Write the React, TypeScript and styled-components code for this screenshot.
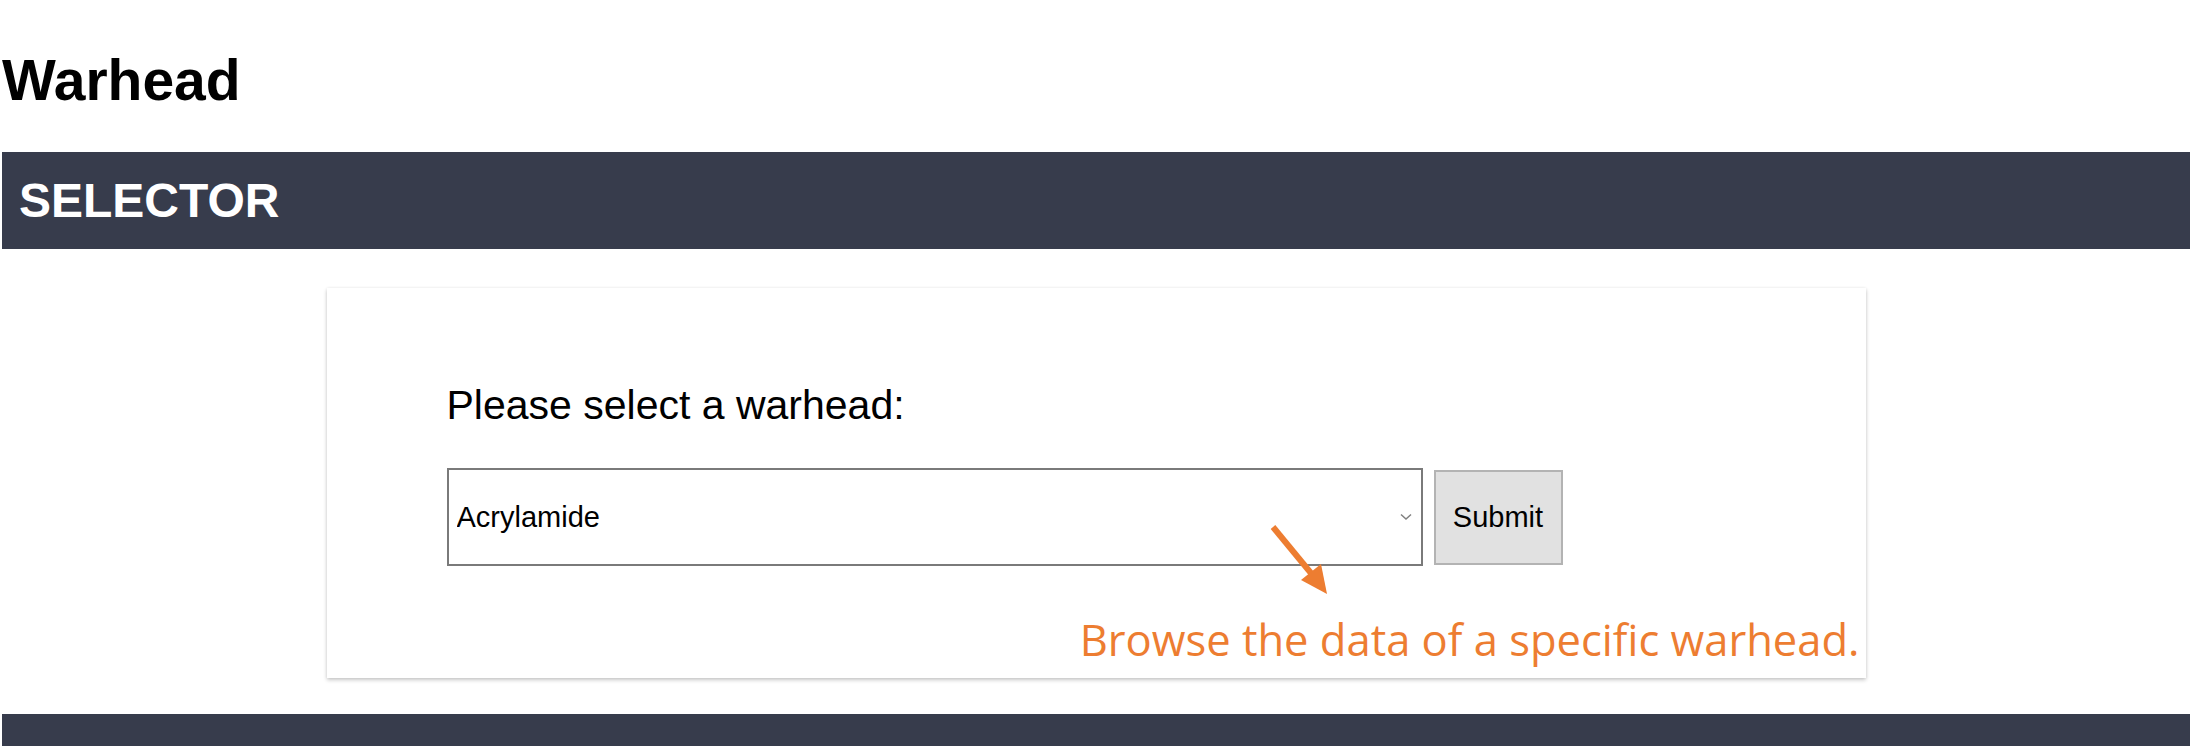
import React from 'react';
import styled, { createGlobalStyle } from 'styled-components';

const GlobalStyle = createGlobalStyle`
  html, body {
    margin: 0;
    padding: 0;
    background: #fff;
  }
  body {
    font-family: 'Liberation Sans', Arial, sans-serif;
  }
`;

const Page = styled.div`
  padding: 0 2px;
`;

const Title = styled.h1`
  margin: 0;
  padding-top: 47px;
  margin-bottom: 39px;
  font-size: 57px;
  font-weight: 700;
  line-height: normal;
  color: #000;
`;

const SectionBar = styled.div<{ height: number }>`
  display: flex;
  align-items: center;
  height: ${({ height }) => height}px;
  padding-left: 17px;
  background: #373c4c;
  color: #fff;
  font-size: 48px;
  font-weight: 700;
`;

const Body = styled.div`
  display: flex;
  justify-content: center;
  padding: 39px 0 36px;
`;

const Card = styled.div`
  position: relative;
  width: 1539px;
  box-sizing: border-box;
  padding: 94px 6px 14px 120px;
  background: #fff;
  box-shadow: 0 2px 4px rgba(0, 0, 0, 0.22), 0 0 3px rgba(0, 0, 0, 0.06);
`;

const Prompt = styled.div`
  font-size: 41px;
  line-height: normal;
  color: #000;
`;

const FormRow = styled.div`
  display: flex;
  align-items: center;
  gap: 11px;
  margin-top: 39px;
`;

const SelectBox = styled.div`
  position: relative;
  width: 976px;
  height: 98px;
`;

const Select = styled.select`
  appearance: none;
  width: 100%;
  height: 100%;
  box-sizing: border-box;
  padding: 0 0 0 8px;
  border: 2px solid #7a7a7a;
  border-radius: 0;
  background: #fff;
  font-family: 'Liberation Sans', Arial, sans-serif;
  font-size: 29px;
  color: #000;
  outline: none;
`;

const Chevron = styled.svg`
  position: absolute;
  right: 11px;
  top: 45px;
  pointer-events: none;
`;

const SubmitButton = styled.button`
  width: 129px;
  height: 95px;
  box-sizing: border-box;
  border: 2px solid #b3b3b3;
  background: #e1e1e1;
  font-family: 'Liberation Sans', Arial, sans-serif;
  font-size: 29px;
  color: #000;
  padding: 0;
`;

const Note = styled.div`
  display: flex;
  justify-content: flex-end;
  margin-top: 50px;
  font-family: 'Open Sans', Lato, sans-serif;
  font-size: 43.5px;
  line-height: 48px;
  color: #ed7d31;
`;

const Arrow = styled.svg`
  position: absolute;
  left: 940px;
  top: 234px;
`;

export default function App() {
  return (
    <>
      <GlobalStyle />
      <Page>
        <Title>Warhead</Title>
        <SectionBar height={97}>SELECTOR</SectionBar>
        <Body>
          <Card>
            <Prompt>Please select a warhead:</Prompt>
            <FormRow>
              <SelectBox>
                <Select defaultValue="Acrylamide">
                  <option>Acrylamide</option>
                </Select>
                <Chevron width="12" height="8" viewBox="0 0 12 8">
                  <path d="M1 1.5 L6 6 L11 1.5" fill="none" stroke="#808080" strokeWidth="1.5" />
                </Chevron>
              </SelectBox>
              <SubmitButton>Submit</SubmitButton>
            </FormRow>
            <Note>Browse the data of a specific warhead.</Note>
            <Arrow width="70" height="80" viewBox="0 0 70 80">
              <line x1="6" y1="5" x2="48" y2="56" stroke="#ed7d31" strokeWidth="6" />
              <polygon points="60,72 34,58 54,42" fill="#ed7d31" />
            </Arrow>
          </Card>
        </Body>
        <SectionBar height={40} />
      </Page>
    </>
  );
}
